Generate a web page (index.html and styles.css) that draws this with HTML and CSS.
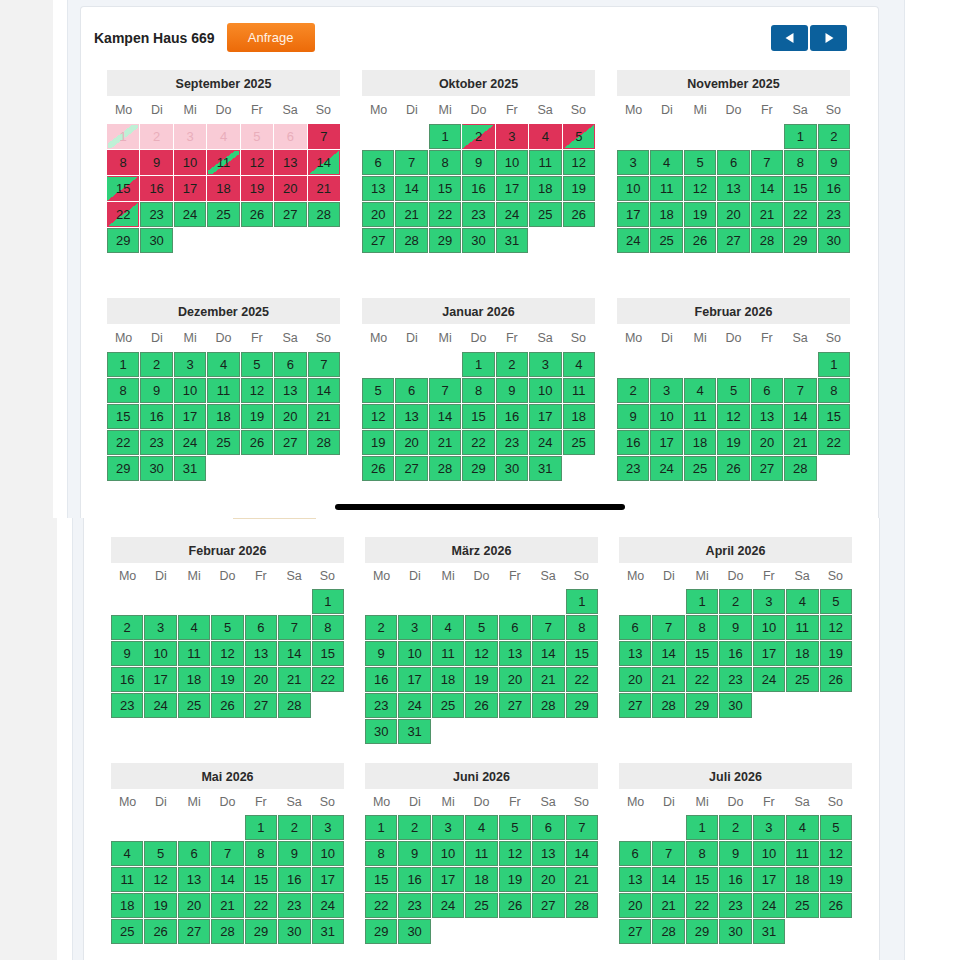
FILE: index.html
```html
<!DOCTYPE html>
<html lang="de">
<head>
    <meta charset="UTF-8">
    <meta name="viewport" content="width=device-width, initial-scale=1.0">
    <title>Kampen Haus 669 - Belegung</title>
    <link rel="stylesheet" href="styles.css">
</head>
<body>
    <!-- first screenshot -->
    <div class="screen screen-top">
        <div class="side-gray"></div>
        <div class="side-white"></div>
        <div class="frame">
            <div class="card">
                <div class="card-head">
                    <h1 class="house-title">Kampen Haus 669</h1>
                    <button type="button" class="btn-request">Anfrage</button>
                    <div class="nav-buttons">
                        <button type="button" class="btn-nav" aria-label="zurück">
                            <svg width="12" height="12" viewBox="0 0 12 12"><polygon points="9.5,1 9.5,11 1.5,6" fill="#fff"/></svg>
                        </button>
                        <button type="button" class="btn-nav" aria-label="weiter">
                            <svg width="12" height="12" viewBox="0 0 12 12"><polygon points="2.5,1 2.5,11 10.5,6" fill="#fff"/></svg>
                        </button>
                    </div>
                </div>
                <div class="months" id="monthsTop"></div>
            </div>
        </div>
        <div class="side-white"></div>
        <div class="home-bar"></div>
    </div>

    <!-- second screenshot -->
    <div class="screen screen-bottom">
        <div class="side-gray"></div>
        <div class="side-white"></div>
        <div class="frame">
            <div class="card">
                <div class="edge-line"></div>
                <div class="months" id="monthsBottom"></div>
            </div>
        </div>
        <div class="side-white"></div>
    </div>

    <script>
        var monthNames = ['Januar', 'Februar', 'März', 'April', 'Mai', 'Juni', 'Juli', 'August', 'September', 'Oktober', 'November', 'Dezember'];
        var weekdays = ['Mo', 'Di', 'Mi', 'Do', 'Fr', 'Sa', 'So'];

        // booking state per day, anything not listed is free
        var bookings = {
            '2025-8': {1: 'past swap', 2: 'past', 3: 'past', 4: 'past', 5: 'past', 6: 'past',
                7: 'busy', 8: 'busy', 9: 'busy', 10: 'busy', 11: 'swap', 12: 'busy', 13: 'busy',
                14: 'out', 15: 'in', 16: 'busy', 17: 'busy', 18: 'busy', 19: 'busy', 20: 'busy',
                21: 'busy', 22: 'out'},
            '2025-9': {2: 'in', 3: 'busy', 4: 'busy', 5: 'out'}
        };

        function buildMonth(year, month) {
            var box = document.createElement('div');
            box.className = 'month';

            var title = document.createElement('div');
            title.className = 'month-title';
            title.textContent = monthNames[month] + ' ' + year;
            box.appendChild(title);

            var head = document.createElement('div');
            head.className = 'weekdays';
            weekdays.forEach(function (w) {
                var s = document.createElement('span');
                s.textContent = w;
                head.appendChild(s);
            });
            box.appendChild(head);

            var grid = document.createElement('div');
            grid.className = 'days';
            var offset = (new Date(year, month, 1).getDay() + 6) % 7;
            var count = new Date(year, month + 1, 0).getDate();
            var marks = bookings[year + '-' + month] || {};

            for (var i = 0; i < offset; i++) {
                var blank = document.createElement('div');
                blank.className = 'blank';
                grid.appendChild(blank);
            }
            for (var d = 1; d <= count; d++) {
                var cell = document.createElement('div');
                cell.className = 'day' + (marks[d] ? ' ' + marks[d] : '');
                cell.textContent = d;
                grid.appendChild(cell);
            }
            box.appendChild(grid);
            return box;
        }

        function fill(id, list) {
            var el = document.getElementById(id);
            list.forEach(function (m) {
                el.appendChild(buildMonth(m[0], m[1]));
            });
        }

        fill('monthsTop', [[2025, 8], [2025, 9], [2025, 10], [2025, 11], [2026, 0], [2026, 1]]);
        fill('monthsBottom', [[2026, 1], [2026, 2], [2026, 3], [2026, 4], [2026, 5], [2026, 6]]);
    </script>
</body>
</html>
```

FILE: styles.css
```css
* {
    box-sizing: border-box;
}
body {
    margin: 0;
    width: 960px;
    height: 960px;
    overflow: hidden;
    background: #fff;
    font-family: "Liberation Sans", Arial, sans-serif;
    color: #222;
}
.screen {
    display: flex;
    position: relative;
    overflow: hidden;
}
.screen-top {
    height: 518px;
}
.screen-bottom {
    height: 442px;
}
.side-gray {
    background: #f2f2f2;
    flex: none;
}
.side-white {
    background: #fff;
    flex: 1;
}
.screen-top .side-gray {
    width: 53px;
}
.screen-top > .side-white:nth-child(2) {
    flex: none;
    width: 14px;
}
.screen-bottom .side-gray {
    width: 57px;
}
.screen-bottom > .side-white:nth-child(2) {
    flex: none;
    width: 15px;
}
.frame {
    flex: none;
    background: #f1f4f8;
    border-left: 1px solid #e3e8ee;
    border-right: 1px solid #e3e8ee;
    display: flex;
}
.screen-top .frame {
    width: 838px;
    padding: 6px 25px 0 12px;
}
.screen-bottom .frame {
    width: 833px;
    padding: 0 24px 0 10px;
}
.card {
    background: #fff;
    border: 1px solid #e2e6eb;
    border-bottom: none;
    flex: 1;
}
.screen-top .card {
    border-radius: 4px 4px 0 0;
}
.screen-bottom .card {
    border-top: none;
}

/* header */
.card-head {
    display: flex;
    align-items: center;
    height: 29px;
    margin: 16px 31px 18px 13px;
}
.house-title {
    font-size: 14px;
    font-weight: bold;
    margin: 0 12px 0 0;
    color: #222;
}
.btn-request {
    width: 88px;
    height: 29px;
    border: none;
    border-radius: 3px;
    background: linear-gradient(#f98b28, #ec6a08);
    color: #fff2e6;
    font-family: inherit;
    font-size: 13px;
    padding: 0;
}
.nav-buttons {
    margin-left: auto;
    display: flex;
    gap: 2px;
}
.btn-nav {
    width: 37px;
    height: 26px;
    border: none;
    border-radius: 3px;
    background: #0b609c;
    padding: 0;
    display: flex;
    align-items: center;
    justify-content: center;
}
.home-bar {
    position: absolute;
    left: 335px;
    top: 504px;
    width: 290px;
    height: 6px;
    border-radius: 3px;
    background: #000;
}
.edge-line {
    margin-left: 149px;
    width: 83px;
    height: 1px;
    background: #ecdcbf;
}

/* months */
.months {
    display: grid;
    grid-template-columns: repeat(3, 233px);
    column-gap: 22px;
    row-gap: 19px;
    margin-left: 26px;
}
.screen-bottom .months {
    margin: 18px 0 0 27px;
    column-gap: 21px;
}
.month-title {
    height: 26px;
    line-height: 28px;
    background: #ededed;
    text-align: center;
    font-size: 12.5px;
    font-weight: bold;
    color: #2a2a2a;
}
.weekdays {
    display: grid;
    grid-template-columns: repeat(7, 1fr);
    height: 28px;
    line-height: 29px;
    text-align: center;
    font-size: 12.5px;
    color: #6d6d6d;
}
.screen-bottom .weekdays {
    height: 26px;
    line-height: 27px;
}
.days {
    display: grid;
    grid-template-columns: repeat(7, 1fr);
    grid-auto-rows: 25px;
    gap: 1px;
    height: 155px;
}
.day {
    background: #2fd07a;
    border: 1px solid #4f9469;
    text-align: center;
    line-height: 23px;
    font-size: 13px;
    color: #16241b;
}
.day.busy {
    background: #df3259;
    border-color: #df3259;
}
.day.in {
    background: linear-gradient(to bottom right, #2fd07a 50%, #df3259 50%);
    border-color: #df3259 #df3259 #df3259 #2fd07a;
}
.day.out {
    background: linear-gradient(to bottom right, #df3259 50%, #2fd07a 50%);
    border-color: #df3259;
}
.day.swap {
    background: linear-gradient(to bottom right, #df3259 43%, #2fd07a 43%, #2fd07a 57%, #df3259 57%);
    border-color: #df3259;
}
.day.past {
    background: #f9cbd6;
    border-color: #f9cbd6;
    color: #e9aebb;
}
.day.past.swap {
    background: linear-gradient(to bottom right, #f9cbd6 40%, #bff0d6 40%, #bff0d6 56%, #f9cbd6 56%);
}
```
